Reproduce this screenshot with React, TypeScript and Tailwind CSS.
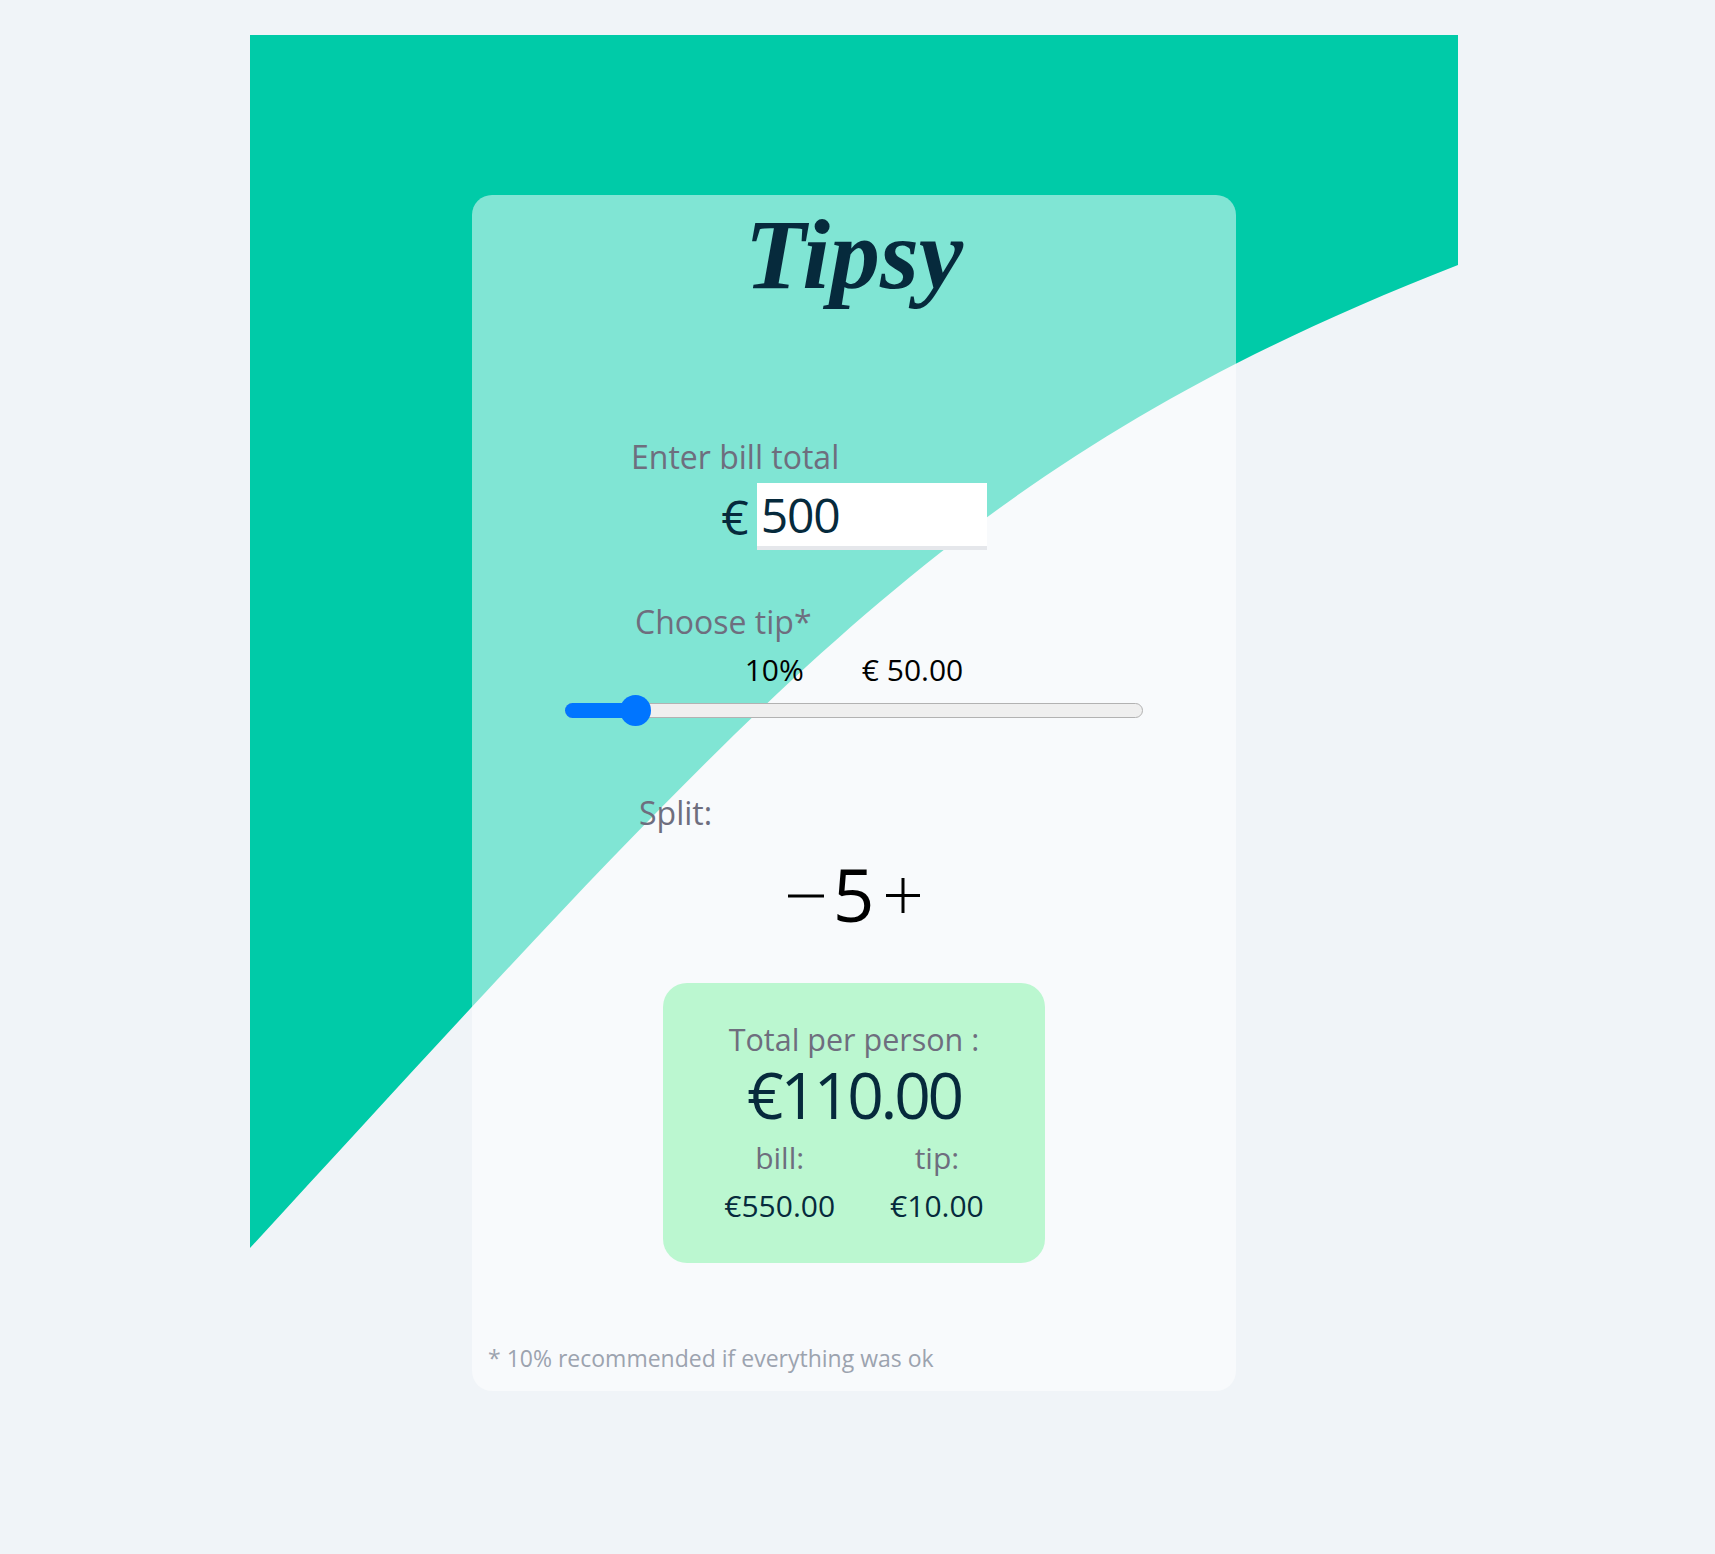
import React, { useState } from "react";

// tipsy - tip calculator
const sans = "font-['Open_Sans','Noto_Sans',sans-serif]";
const navy = "text-[#062a3c]";
const label = `${sans} text-[32px] leading-[40px] text-[#6e6e7e]`;

const TRACK_W = 578;
const THUMB = 31;

function fmt(n: number) {
  return n.toFixed(2);
}

export default function App() {
  const [bill, setBill] = useState("500");
  const [tip, setTip] = useState(10);
  const [split, setSplit] = useState(5);

  const billNum = parseFloat(bill) || 0;
  const tipAmount = (billNum * tip) / 100;
  const total = billNum + tipAmount;
  const perPerson = total / split;
  const tipPerPerson = tipAmount / split;

  const thumbLeft = (tip / 100) * (TRACK_W - THUMB);

  return (
    <div className="min-h-screen w-full bg-[#f0f4f8] pt-[35px] pr-[7px]">
      <div className="relative mx-auto w-[1208px] pt-[160px] pb-[40px]">
        {/* green background wave */}
        <svg
          className="absolute left-0 top-0"
          width="1208"
          height="1213"
          viewBox="0 0 1208 1213"
          aria-hidden="true"
        >
          <path d="M0 0 H1208 V230 C708 425 520 648 0 1213 Z" fill="#00cba8" />
        </svg>

        <div className="relative mx-auto flex w-[764px] flex-col rounded-[20px] bg-white/50 pt-[10px] pb-[18px]">
          <h1
            className={`text-center font-['Liberation_Serif',serif] text-[100px] font-bold italic leading-none ${navy}`}
          >
            Tipsy
          </h1>

          {/* bill */}
          <div className="mx-auto mt-[132px] w-[446px]">
            <p className={label}>Enter bill total</p>
          </div>
          <div className="mt-[6px] flex items-center justify-center gap-2">
            <span className={`${sans} text-[48px] leading-[67px] ${navy}`}>€</span>
            <input
              type="text"
              value={bill}
              onChange={(e) => setBill(e.target.value)}
              className={`${sans} h-[67px] w-[230px] border-b-4 border-[#e5e7eb] bg-white pl-1 text-[48px] tracking-[-0.025em] outline-none ${navy}`}
            />
          </div>

          {/* tip */}
          <div className="mx-auto mt-[52px] w-[446px]">
            <p className={`${label} ml-[4px]`}>Choose tip*</p>
          </div>
          <div
            className={`${sans} mt-2 flex justify-center gap-[58px] text-[30px] leading-[40px] text-black`}
          >
            <span>{tip}%</span>
            <span>€ {fmt(tipAmount)}</span>
          </div>
          <div className="relative mx-auto mt-[5px] flex h-[31px] w-[578px] items-center">
            <div className="h-[15px] w-full rounded-full border-[1.5px] border-[#b2b2b2] bg-[#efefef]" />
            <div
              className="absolute left-0 h-[15px] rounded-full bg-[#0075ff]"
              style={{ width: thumbLeft + THUMB / 2 }}
            />
            <div
              className="absolute top-0 h-[31px] w-[31px] rounded-full bg-[#0075ff]"
              style={{ left: thumbLeft }}
            />
            <input
              type="range"
              min={0}
              max={100}
              value={tip}
              onChange={(e) => setTip(Number(e.target.value))}
              className="absolute inset-0 h-full w-full cursor-pointer opacity-0"
              aria-label="Tip percentage"
            />
          </div>

          {/* split */}
          <div className="mx-auto mt-[67px] w-[446px]">
            <p className={`${label} ml-[8px]`}>Split:</p>
          </div>
          <div className="mt-6 flex items-center justify-center">
            <button
              type="button"
              aria-label="decrease"
              onClick={() => setSplit((s) => Math.max(1, s - 1))}
              className="mt-[4px]"
            >
              <svg width="36" height="36" viewBox="0 0 36 36">
                <line x1="0" y1="18" x2="36" y2="18" stroke="#000" strokeWidth="3" />
              </svg>
            </button>
            <span className={`${sans} ml-[9px] mr-[12px] text-[73px] leading-none text-black`}>
              {split}
            </span>
            <button
              type="button"
              aria-label="increase"
              onClick={() => setSplit((s) => s + 1)}
              className="mt-[4px]"
            >
              <svg width="34" height="35" viewBox="0 0 34 35">
                <line x1="0" y1="17.5" x2="34" y2="17.5" stroke="#000" strokeWidth="3" />
                <line x1="17" y1="0" x2="17" y2="35" stroke="#000" strokeWidth="3" />
              </svg>
            </button>
          </div>

          {/* result */}
          <div className="mx-auto mt-[53px] flex h-[280px] w-[382px] flex-col items-center rounded-3xl bg-[#bbf7d0] pt-[36px]">
            <p className={`${sans} text-[30.5px] leading-[40px] text-[#6e6e7e]`}>
              Total per person :
            </p>
            <p className={`${sans} mt-[4px] text-[64px] leading-none tracking-[-0.05em] ${navy}`}>
              €{fmt(perPerson)}
            </p>
            <div className="mt-[11px] flex gap-[55px]">
              <div className="flex flex-col items-center">
                <span className={`${sans} text-[30px] leading-[40px] text-[#6e6e7e]`}>bill:</span>
                <span className={`${sans} mt-2 text-[30px] leading-[40px] ${navy}`}>
                  €{fmt(total)}
                </span>
              </div>
              <div className="flex flex-col items-center">
                <span className={`${sans} text-[30px] leading-[40px] text-[#6e6e7e]`}>tip:</span>
                <span className={`${sans} mt-2 text-[30px] leading-[40px] ${navy}`}>
                  €{fmt(tipPerPerson)}
                </span>
              </div>
            </div>
          </div>

          <p className={`${sans} mt-[80px] pl-4 text-[23px] leading-[30px] text-[#9ca3af]`}>
            * 10% recommended if everything was ok
          </p>
        </div>
      </div>
    </div>
  );
}
